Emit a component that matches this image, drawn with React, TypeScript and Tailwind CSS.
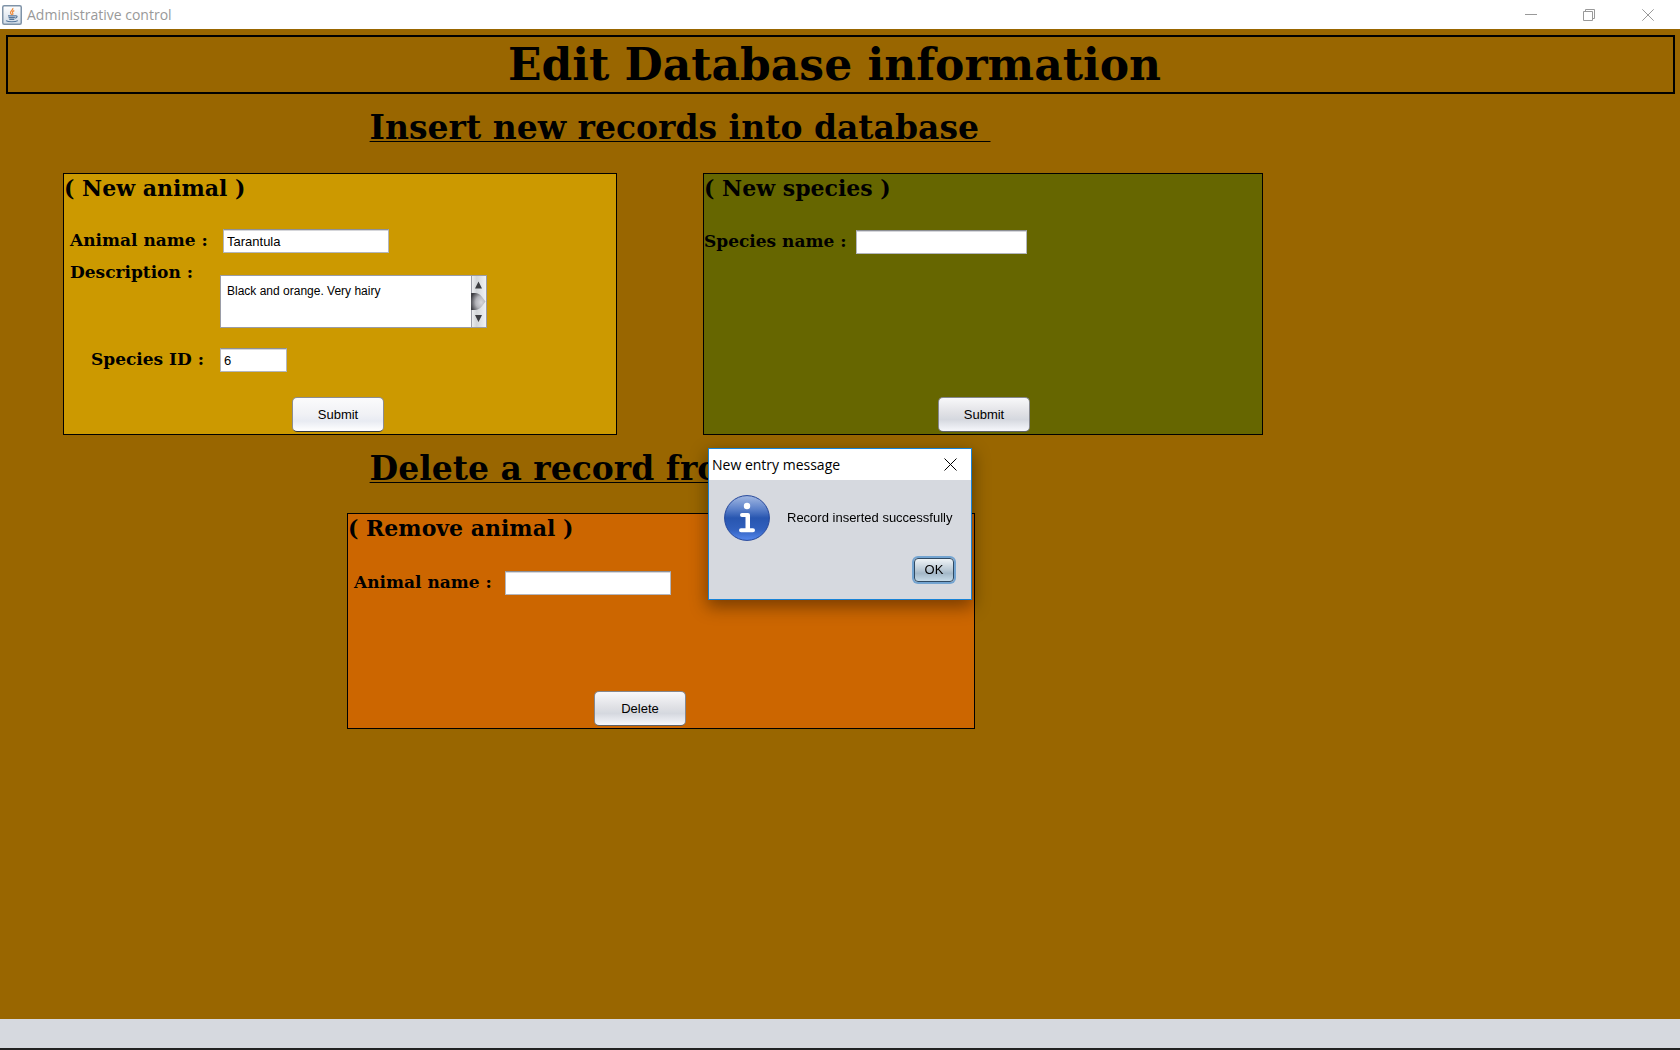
import { useId } from 'react';
import type { ReactNode } from 'react';

const serif = "font-['Georgia','DejaVu_Serif',serif] font-bold text-black";
const inputBase =
  "h-6 border border-[#b3b6bd] border-t-[#8e9096] bg-white px-[3px] text-[13px] text-black outline-none shadow-[inset_0_1px_0_#d5d6da] font-['Liberation_Sans',Arial,sans-serif]";

function JavaIcon() {
  return (
    <svg width="20" height="20" viewBox="0 0 20 20" aria-hidden="true">
      <defs>
        <linearGradient id="javaTile" x1="0" y1="0" x2="0" y2="1">
          <stop offset="0" stopColor="#ffffff" />
          <stop offset="1" stopColor="#cfdae6" />
        </linearGradient>
      </defs>
      <rect x="0.75" y="0.75" width="18.5" height="18.5" rx="1.5" fill="url(#javaTile)" stroke="#7f93a8" strokeWidth="1.5" />
      <path d="M10.8 3c.9 2-3 2.900-2.300 5 .3.900 1.100 1.400 1.200 2M12.300 5.600c-1.500.6-2.400 1.500-1.600 2.600.5.700.2 1.200-.2 1.600" fill="none" stroke="#ee8a3a" strokeWidth="1.200" />
      <path d="M6 10.800h7.500M6.600 12.600h6.300M7.300 14.300h5M13.300 10.800c2.500-.4 2.200 2-.2 2.400" fill="none" stroke="#56779b" strokeWidth="1.200" />
      <path d="M4 15.600c2 1.500 9.500 1.500 11.800 0" fill="none" stroke="#56779b" strokeWidth="1.100" />
    </svg>
  );
}

function TitleBar() {
  return (
    <div className="flex h-[29px] items-center justify-between bg-white pl-[2px] pr-[26px]">
      <div className="flex items-center gap-[5px] font-['Segoe_UI','Open_Sans',sans-serif] text-[14px] leading-5 text-[#999999]">
        <JavaIcon />
        <span>Administrative control</span>
      </div>
      <div className="flex gap-[46px]">
        <button aria-label="Minimize" className="h-3 w-3">
          <svg width="12" height="12" viewBox="0 0 12 12"><path d="M0 5.500h12" stroke="#999" /></svg>
        </button>
        <button aria-label="Restore" className="h-3 w-3">
          <svg width="12" height="12" viewBox="0 0 12 12"><path d="M.5 2.500h9v9h-9zM2.500 2.500v-2h9v9h-2" fill="none" stroke="#999" /></svg>
        </button>
        <button aria-label="Close" className="ml-px h-3 w-3">
          <svg width="12" height="12" viewBox="0 0 12 12"><path d="M.3.3l11.400 11.400M11.700.3L.3 11.700" stroke="#999" /></svg>
        </button>
      </div>
    </div>
  );
}

function Panel({ title, color, children }: { title: string; color: string; children: ReactNode }) {
  return (
    <form className={`flex flex-col border border-black ${color}`} onSubmit={(e) => e.preventDefault()}>
      <h3 className={`${serif} whitespace-nowrap text-[22px] leading-7`}>{title}</h3>
      {children}
    </form>
  );
}

function FormButton({ children, bright = false }: { children: ReactNode; bright?: boolean }) {
  const tone = bright
    ? 'border-[#8c8d92] border-b-[#303540] bg-[linear-gradient(#fbfbfc,#f0f1f5_50%,#e8ebf2_70%,#ffffff)]'
    : 'border-[#85878d] border-b-[#5c6068] bg-[linear-gradient(#f8f8fa,#e0e1e5_45%,#d5d8df_65%,#f6f7fc)]';
  return (
    <button
      className={`h-[35px] w-[92px] rounded-[5px] border font-['Liberation_Sans',Arial,sans-serif] text-[13px] text-black ${tone}`}
    >
      {children}
    </button>
  );
}

function ScrollBar() {
  return (
    <svg width="16" height="51" viewBox="0 0 16 51" aria-hidden="true" className="shrink-0">
      <defs>
        <linearGradient id="track" x1="0" x2="1">
          <stop offset="0" stopColor="#f1f2f4" />
          <stop offset="0.35" stopColor="#d3d6da" />
          <stop offset="1" stopColor="#f4f5f7" />
        </linearGradient>
        <radialGradient id="thumb" cx="0.7" cy="0.55" r="0.75">
          <stop offset="0" stopColor="#d8d8dd" />
          <stop offset="0.5" stopColor="#b2b2b8" />
          <stop offset="1" stopColor="#3f3f45" />
        </radialGradient>
      </defs>
      <rect width="16" height="51" fill="url(#track)" />
      <path d="M.5 0v51M15.500 0v51" stroke="#9a9ca6" />
      <path d="M0 17h4c5 0 7 4 10.500 8.500-3.500 4.500-5.500 8.500-10.500 8.500H0z" fill="url(#thumb)" />
      <path d="M4 12.500L7.500 5.500l3.500 7zM4 39L7.500 46l3.500-7z" fill="#3c3d42" />
    </svg>
  );
}

function InfoIcon() {
  return (
    <svg width="46" height="46" viewBox="0 0 46 46" aria-hidden="true">
      <defs>
        <linearGradient id="info" x1="0" y1="0" x2="0" y2="1">
          <stop offset="0" stopColor="#a3b9e2" />
          <stop offset="0.3" stopColor="#5c81ca" />
          <stop offset="0.5" stopColor="#2856b0" />
          <stop offset="0.75" stopColor="#3160bd" />
          <stop offset="1" stopColor="#5688ee" />
        </linearGradient>
      </defs>
      <circle cx="23" cy="23" r="22.400" fill="url(#info)" stroke="#25479a" />
      <circle cx="23" cy="11" r="3.200" fill="#fff" />
      <path d="M18 20h6v14M23.500 20v14M17 35.200h12" fill="none" stroke="#fff" strokeWidth="4" strokeLinecap="round" strokeLinejoin="round" />
    </svg>
  );
}

function MessageDialog() {
  return (
    <div className="fixed inset-0 flex items-center justify-center">
      <div
        role="dialog"
        aria-label="New entry message"
        className="mb-[2px] w-[264px] border border-[#1883d7] bg-[#d6d9df] shadow-[0_6px_16px_1px_rgba(0,0,0,0.4)]"
      >
        <div className="flex h-[31px] items-center justify-between bg-white pl-[3px] pr-[14px]">
          <h2 className="font-['Segoe_UI','Open_Sans',sans-serif] text-[14px] text-black">New entry message</h2>
          <button aria-label="Close message" className="h-[13px] w-[13px]">
            <svg width="13" height="13" viewBox="0 0 13 13"><path d="M.5.5l12 12M12.500.5l-12 12" stroke="#000" /></svg>
          </button>
        </div>
        <div className="flex items-center gap-[17px] px-[15px] pt-[15px]">
          <InfoIcon />
          <p className="whitespace-nowrap font-['Liberation_Sans',Arial,sans-serif] text-[13px] leading-4 text-black">
            Record inserted successfully
          </p>
        </div>
        <div className="flex justify-end px-[17px] pb-[17px] pt-[17px]">
          <button className="h-6 w-10 rounded-[4px] border border-[#2f4a63] bg-[linear-gradient(#eef3f6,#b9c9d5_50%,#a3b8c8_65%,#c6dbe8)] font-['Liberation_Sans',Arial,sans-serif] text-[13px] leading-4 text-black shadow-[0_0_0_2px_#73a4d1]">
            OK
          </button>
        </div>
      </div>
    </div>
  );
}

export default function App() {
  const id = useId();
  const label = `${serif} whitespace-nowrap text-[17px] leading-[22px]`;
  const sectionTitle = `${serif} whitespace-pre text-[33px] leading-10 underline decoration-1 underline-offset-2 [text-decoration-skip-ink:none]`;
  return (
    <div className="flex min-h-screen flex-col bg-[#996600]">
      <TitleBar />
      <main className="grow">
        <header className="ml-[6px] mr-[5px] mt-[6px] h-[59px] border-2 border-black pr-3 text-center">
          <h1 className={`${serif} text-[44px] leading-[56px]`}>Edit Database information</h1>
        </header>

        <h2 className={`${sectionTitle} ml-[22%] mt-[14px]`}>{'Insert new records into database '}</h2>
        <div className="mt-[25px] grid h-[262px] grid-cols-[63fr_554fr_86fr_560fr_417fr]">
          <div className="col-start-2 grid">
            <Panel title="( New animal )" color="bg-[#cc9900]">
              <div className="ml-[6px] mt-[27px] grid grid-cols-[150px_auto] justify-start">
                <label htmlFor={`${id}-name`} className={label}>Animal name :</label>
                <input id={`${id}-name`} defaultValue="Tarantula" className={`${inputBase} ml-[3px] w-[166px]`} />
                <label htmlFor={`${id}-desc`} className={`${label} mt-2`}>Description :</label>
                <div className="mt-[22px] flex h-[53px] w-[267px] border border-r-0 border-[#9a9ca6] bg-white">
                  <textarea
                    id={`${id}-desc`}
                    defaultValue="Black and orange. Very hairy"
                    className="grow resize-none overflow-hidden bg-white px-[6px] pt-[7px] font-['Liberation_Sans',Arial,sans-serif] text-[12px] leading-4 text-black outline-none"
                  />
                  <ScrollBar />
                </div>
                <label htmlFor={`${id}-sid`} className={`${label} ml-[21px] mt-5`}>Species ID :</label>
                <input id={`${id}-sid`} defaultValue="6" className={`${inputBase} mt-5 w-[67px]`} />
              </div>
              <div className="mb-[2px] mt-auto flex justify-center pr-1">
                <FormButton bright>Submit</FormButton>
              </div>
            </Panel>
          </div>
          <div className="col-start-4 grid">
            <Panel title="( New species )" color="bg-[#666600]">
              <div className="mt-7 flex">
                <label htmlFor={`${id}-species`} className={`${label} w-[152px]`}>Species name :</label>
                <input id={`${id}-species`} className={`${inputBase} w-[171px]`} />
              </div>
              <div className="mb-[2px] mt-auto flex justify-center pl-[2px]">
                <FormButton>Submit</FormButton>
              </div>
            </Panel>
          </div>
        </div>

        <h2 className={`${sectionTitle} ml-[22%] mt-[14px]`}>{'Delete a record from database '}</h2>
        <div className="mt-6 grid h-[216px] grid-cols-[347fr_628fr_705fr]">
          <div className="col-start-2 grid">
            <Panel title="( Remove animal )" color="bg-[#cc6600]">
              <div className="ml-[6px] mt-[29px] flex">
                <label htmlFor={`${id}-remove`} className={`${label} w-[151px]`}>Animal name :</label>
                <input id={`${id}-remove`} className={`${inputBase} w-[166px]`} />
              </div>
              <div className="mb-[2px] mt-auto flex justify-center pr-[42px]">
                <FormButton>Delete</FormButton>
              </div>
            </Panel>
          </div>
        </div>
      </main>
      <footer className="h-[31px] border-b-2 border-[#222222] bg-[#d6d9df]" />
      <MessageDialog />
    </div>
  );
}
